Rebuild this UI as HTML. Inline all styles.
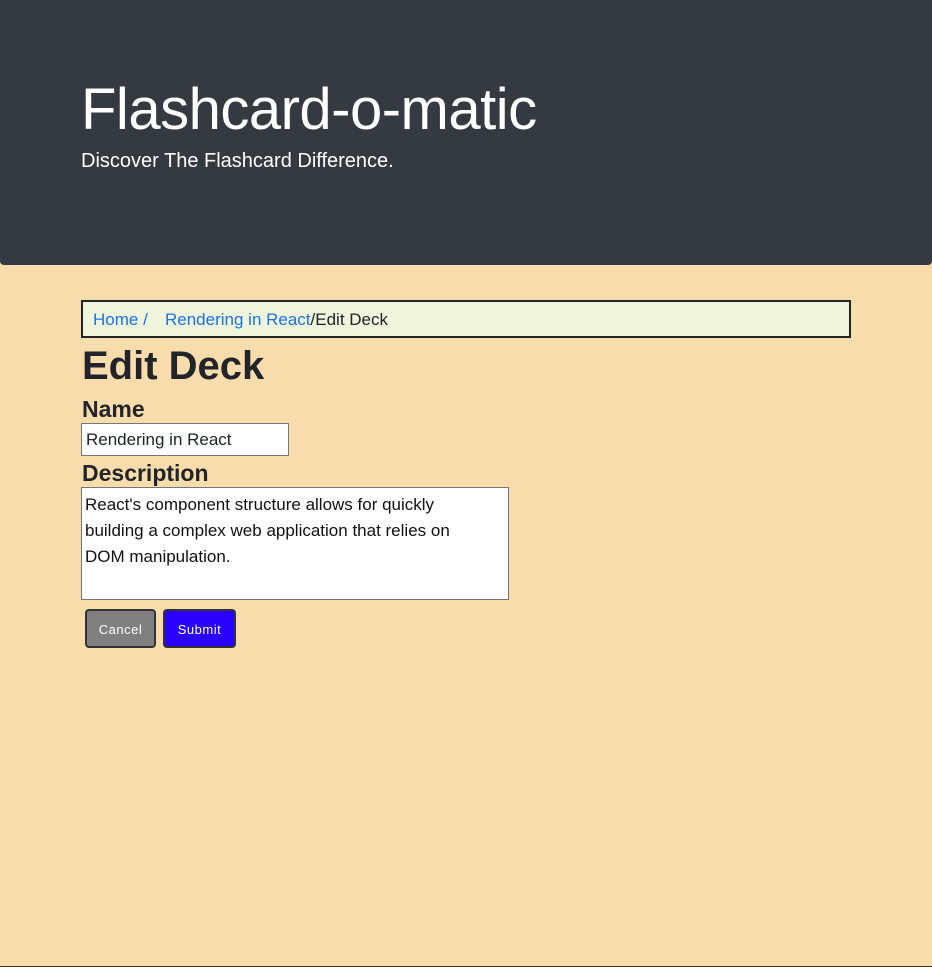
<!DOCTYPE html>
<html><head><style>
body{margin:0;width:932px;height:967px;background:#f8dcab;font-family:"Liberation Sans",sans-serif;position:relative;overflow:hidden;color:#212529}
.hero{position:absolute;left:0;top:0;width:932px;height:265px;background:#343a40;border-radius:0 0 4px 4px;color:#fff}
.hero h1{position:absolute;left:81px;top:76px;margin:0;font-size:58px;font-weight:300;letter-spacing:-0.5px}
.hero p{position:absolute;left:81px;top:150px;margin:0;font-size:20px;font-weight:300}
.bc{position:absolute;left:81px;top:300px;width:766px;height:34px;border:2px solid #212529;background:#f0f4dc;font-size:17px;line-height:36px;box-sizing:content-box}
.bc span{position:absolute;top:0}
a{color:#1a73e8;text-decoration:none}
h2{position:absolute;left:82px;top:344px;margin:0;font-size:40px;font-weight:bold}
.l{position:absolute;left:82px;margin:0;font-size:23px;font-weight:bold}
.in{position:absolute;left:81px;top:423px;border:1px solid #767676;background:#fff;font-size:17px;line-height:31px;padding-left:4px;box-sizing:border-box;width:208px;height:33px}
.ta{position:absolute;left:81px;top:487px;width:428px;height:113px;border:1px solid #767676;background:#fff;box-sizing:border-box;font-size:17px;line-height:26px;padding:4px 50px 3px 3px;color:#111}
.b{position:absolute;top:609px;height:39px;border:2px solid #333;border-radius:4px;font-size:13px;color:#fff;line-height:38px;text-align:center;box-sizing:border-box;letter-spacing:0.5px}
.foot{position:absolute;left:0;bottom:0;width:932px;height:1px;background:#3a3526}
</style></head><body>
<div class="hero"><h1>Flashcard-o-matic</h1><p>Discover The Flashcard Difference.</p></div>
<div class="bc"><span style="left:10px"><a>Home /</a></span><span style="left:82px"><a>Rendering in React</a>/Edit Deck</span></div>
<h2>Edit Deck</h2>
<div class="l" style="top:396px">Name</div>
<div class="in">Rendering in React</div>
<div class="l" style="top:460px">Description</div>
<div class="ta">React's component structure allows for quickly building a complex web application that relies on DOM manipulation.</div>
<div class="b" style="left:85px;width:71px;background:#808080">Cancel</div>
<div class="b" style="left:163px;width:73px;background:#2a00ff">Submit</div>
<div class="foot"></div>
</body></html>
